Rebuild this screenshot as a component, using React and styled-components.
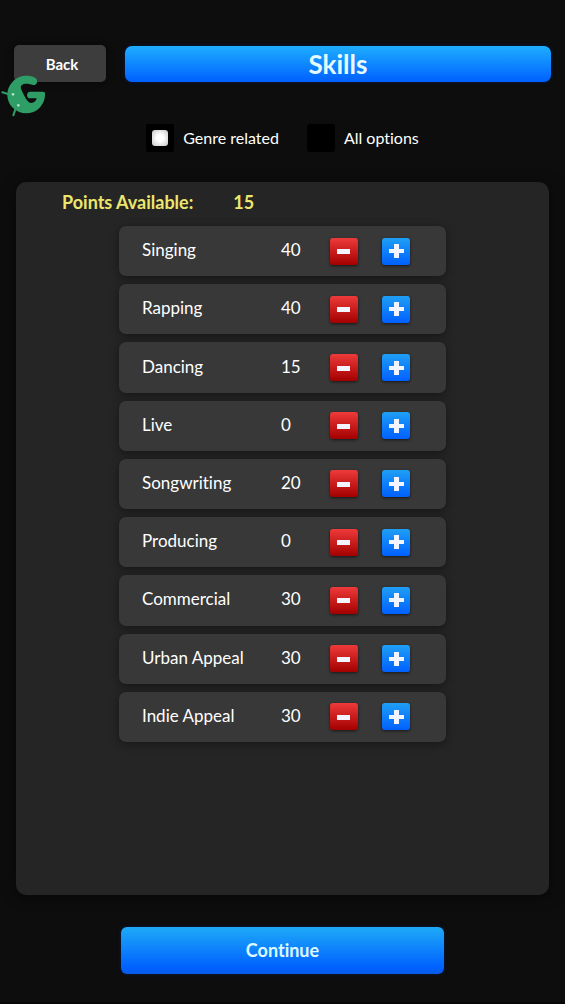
import React, { useState } from "react";
import styled, { createGlobalStyle } from "styled-components";

const GlobalStyle = createGlobalStyle`
  *, *::before, *::after { box-sizing: border-box; }
  body { margin: 0; background: #0d0d0d; }
  button, input { font: inherit; margin: 0; }
`;

const Page = styled.main`
  position: relative;
  display: flex;
  flex-direction: column;
  min-height: 100vh;
  padding: 45px 14px 28px;
  border-bottom: 2px solid #060606;
  background: #0d0d0d;
  color: #fff;
  font-family: Lato, "Liberation Sans", sans-serif;
  font-variant-ligatures: none;
  font-size: 18px;
  line-height: 24px;
`;

const Header = styled.header`
  display: flex;
  align-items: center;
  gap: 19px;
`;

const BackButton = styled.button`
  flex: none;
  width: 92px;
  height: 37px;
  padding: 0 0 0 4px;
  border: 0;
  border-radius: 5px;
  background: #3d3d3d;
  color: #fff;
  font-size: 15px;
  font-weight: 700;
  box-shadow: 0 0 6px rgba(0, 0, 0, 0.5);
  cursor: pointer;
`;

const Title = styled.h1`
  flex: 1;
  margin: 0;
  border-radius: 7px;
  background: linear-gradient(#1eaeff, #0060ff);
  box-shadow: 0 0 4px rgba(0, 30, 90, 0.7);
  color: #e6fbff;
  font-size: 26px;
  font-weight: 700;
  line-height: 36px;
  text-align: center;
`;

const Logo = styled.svg`
  position: absolute;
  left: 0;
  top: 72px;
  width: 50px;
  height: 48px;
`;

const Filters = styled.fieldset`
  display: flex;
  justify-content: center;
  gap: 28px;
  margin: 42px 0 30px;
  padding: 0;
  border: 0;
`;

const Option = styled.label`
  display: flex;
  align-items: center;
  gap: 9px;
  font-size: 16px;
  line-height: 28px;
  cursor: pointer;
`;

const Radio = styled.input`
  appearance: none;
  display: grid;
  place-items: center;
  width: 28px;
  height: 28px;
  border-radius: 3px;
  background: #000;

  &:checked::before {
    content: "";
    width: 16px;
    height: 16px;
    border-radius: 3px;
    background: radial-gradient(#fff 30%, #c4c4c4);
  }
`;

const Panel = styled.section`
  flex: 1;
  margin: 0 2px 32px;
  padding: 8px 16px 24px;
  border-radius: 10px;
  background: #252525;
  box-shadow: 0 2px 14px rgba(0, 0, 0, 0.5);
`;

const Points = styled.p`
  display: flex;
  gap: 40px;
  margin: 0 0 12px 30px;
  color: #ece66c;
  font-weight: 700;
`;

const SkillList = styled.ul`
  display: grid;
  grid-auto-rows: 1fr;
  gap: 8px;
  max-width: 327px;
  min-height: 516px;
  margin: 0 auto;
  padding: 0;
  list-style: none;
`;

const SkillRow = styled.li`
  display: grid;
  grid-template-columns: 139px 1fr auto;
  align-items: center;
  padding: 0 36px 0 23px;
  border-radius: 7px;
  background: #383838;
  box-shadow: 0 2px 8px rgba(0, 0, 0, 0.4);
`;

const SkillText = styled.span`
  padding-bottom: 2px;
  font-size: 17px;
  white-space: nowrap;
`;

const Stepper = styled.div`
  display: flex;
  gap: 24px;
`;

const StepButton = styled.button`
  display: grid;
  place-items: center;
  width: 28px;
  height: 27px;
  padding: 0;
  border: 0;
  border-radius: 3px;
  background: ${({ $up }) =>
    $up ? "linear-gradient(#1f9ff5, #0060ff)" : "linear-gradient(#ee3a3a, #a30000)"};
  box-shadow: 0 1px 3px rgba(0, 0, 0, 0.6);
  color: #f2f4ff;
  cursor: pointer;
`;

const ContinueButton = styled.button`
  align-self: center;
  width: 60%;
  height: 47px;
  padding: 0 0 2px;
  border: 0;
  border-radius: 6px;
  background: linear-gradient(#1eaaf8, #0060ff 88%, #0a5ae6);
  box-shadow: 0 0 4px rgba(0, 30, 90, 0.7);
  color: #dcfaff;
  font-weight: 700;
  cursor: pointer;
`;

const initialSkills = [
  ["Singing", 40],
  ["Rapping", 40],
  ["Dancing", 15],
  ["Live", 0],
  ["Songwriting", 20],
  ["Producing", 0],
  ["Commercial", 30],
  ["Urban Appeal", 30],
  ["Indie Appeal", 30],
];

function StepIcon({ up }) {
  return (
    <svg width="16" height="16" viewBox="0 0 16 16" aria-hidden="true">
      <path
        d={up ? "M6 1h5v5h5v4h-5v5h-5v-5h-5v-4h5z" : "M1 6h13v5h-13z"}
        fill="currentColor"
      />
    </svg>
  );
}

export default function App() {
  const [skills, setSkills] = useState(initialSkills);
  const [points, setPoints] = useState(15);
  const [filter, setFilter] = useState("genre");

  const change = (index, delta) => {
    if (points - delta < 0 || skills[index][1] + delta < 0) return;
    setSkills(skills.map(([n, v], i) => [n, i === index ? v + delta : v]));
    setPoints(points - delta);
  };

  return (
    <>
      <GlobalStyle />
      <Page>
        <Header>
          <BackButton type="button">Back</BackButton>
          <Title>Skills</Title>
        </Header>
        <Logo viewBox="0 0 150 144" aria-hidden="true">
          <path
            d="M105 17C86 8 57 9 38 29C16 52 17 86 39 108C61 130 98 129 119 107C131 95 136 79 135 64Q135 59 129 59H91C78 59 78 79 91 79H110C108 90 97 96 87 91C80 86 69 65 63 50C60 40 68 35 79 35C86 35 92 37 99 39C111 42 117 23 105 17Z"
            fill="#2f9d66"
          />
          <path d="M7 61l24 7M40 130l8-24" fill="none" stroke="#2f9d66" strokeWidth="6" strokeLinecap="round" />
          <circle cx="39" cy="67" r="4" fill="#b4e2c8" />
          <circle cx="55" cy="100" r="4" fill="#b4e2c8" />
        </Logo>
        <Filters>
          <Option>
            <Radio type="radio" name="filter" checked={filter === "genre"} onChange={() => setFilter("genre")} />
            Genre related
          </Option>
          <Option>
            <Radio type="radio" name="filter" checked={filter === "all"} onChange={() => setFilter("all")} />
            All options
          </Option>
        </Filters>
        <Panel>
          <Points>
            <span>Points Available:</span>
            <span>{points}</span>
          </Points>
          <SkillList>
            {skills.map(([name, value], i) => (
              <SkillRow key={name}>
                <SkillText>{name}</SkillText>
                <SkillText>{value}</SkillText>
                <Stepper>
                  <StepButton type="button" aria-label={`Decrease ${name}`} onClick={() => change(i, -5)}>
                    <StepIcon />
                  </StepButton>
                  <StepButton type="button" $up aria-label={`Increase ${name}`} onClick={() => change(i, 5)}>
                    <StepIcon up />
                  </StepButton>
                </Stepper>
              </SkillRow>
            ))}
          </SkillList>
        </Panel>
        <ContinueButton type="button">Continue</ContinueButton>
      </Page>
    </>
  );
}
